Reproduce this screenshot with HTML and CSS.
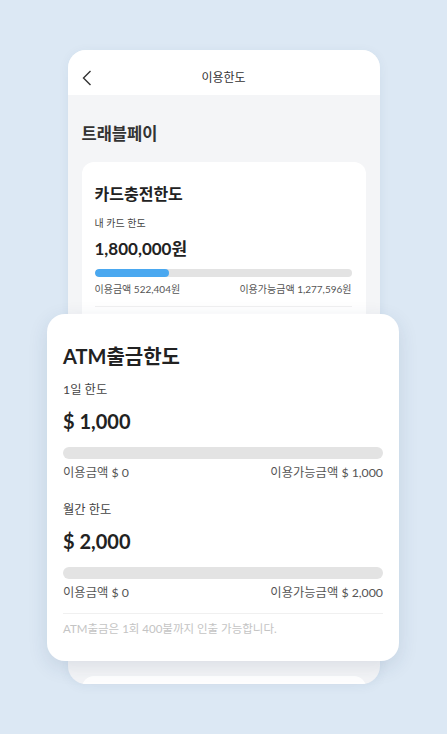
FILE: index.html
```html
<!DOCTYPE html>
<html lang="ko">
  <head>
    <meta charset="UTF-8" />
    <meta name="viewport" content="width=device-width, initial-scale=1.0" />
    <title>이용한도</title>
    <link rel="stylesheet" href="styles.css">
  </head>

  <body>
    <div class="stage">
      <div class="phone">
        <header class="phone-header">
          <svg class="back" width="10" height="16" viewBox="0 0 10 16">
            <path d="M8.5 1 L1.5 8 L8.5 15" fill="none" stroke="#333" stroke-width="1.4" />
          </svg>
          <span>이용한도</span>
        </header>

        <div class="phone-body">
          <div class="page-title">트래블페이</div>

          <section class="card">
            <div class="limit-title">카드충전한도</div>
            <div class="limit-label">내 카드 한도</div>
            <div class="limit-amount">1,800,000원</div>
            <div class="bar"><div class="bar-fill" style="width: 29%"></div></div>
            <div class="bar-info">
              <span>이용금액 522,404원</span>
              <span>이용가능금액 1,277,596원</span>
            </div>
            <div class="divider"></div>
            <!-- ATM section sits under the enlarged callout -->
            <div class="card-rest"></div>
          </section>

          <section class="card next-card"></section>
        </div>
      </div>

      <section class="callout">
        <div class="limit-title">ATM출금한도</div>
        <div class="limit-label">1일 한도</div>
        <div class="limit-amount">$ 1,000</div>
        <div class="bar"></div>
        <div class="bar-info">
          <span>이용금액 $ 0</span>
          <span>이용가능금액 $ 1,000</span>
        </div>
        <div class="limit-label second">월간 한도</div>
        <div class="limit-amount">$ 2,000</div>
        <div class="bar"></div>
        <div class="bar-info">
          <span>이용금액 $ 0</span>
          <span>이용가능금액 $ 2,000</span>
        </div>
        <div class="divider"></div>
        <div class="note">ATM출금은 1회 400불까지 인출 가능합니다.</div>
      </section>
    </div>
  </body>
</html>
```

FILE: styles.css
```css
body {
  margin: 0;
  font-family: "Lato", "Noto Sans CJK KR", sans-serif;
  background: #dce8f4;
  color: #222;
  height: 734px;
  overflow: hidden;
}

.stage {
  position: relative;
  display: flex;
  justify-content: center;
  padding-top: 50px;
}

/* phone frame behind the callout */
.phone {
  width: 312px;
  height: 634px;
  border-radius: 18px;
  overflow: hidden;
  background: #f4f5f7;
  box-shadow: 0 2px 12px rgba(40, 70, 110, 0.06);
}

.phone-header {
  position: relative;
  height: 45px;
  padding-top: 10px;
  box-sizing: border-box;
  background: #ffffff;
  text-align: center;
  font-size: 12px;
  line-height: 35px;
  color: #333;
}

.back {
  position: absolute;
  left: 14px;
  top: 20px;
}

.phone-body {
  padding: 27px 14px 0;
}

.page-title {
  font-size: 16.5px;
  font-weight: bold;
  line-height: 24px;
  color: #333;
}

.card {
  margin-top: 16px;
  padding: 21px 14px 20px 13px;
  background: #ffffff;
  border-radius: 12px;
}

.card .limit-title {
  font-size: 16px;
  font-weight: bold;
  line-height: 22px;
}

.card .limit-label {
  margin-top: 12px;
  font-size: 10px;
  line-height: 13px;
  color: #444;
}

.card .limit-amount {
  margin-top: 7px;
  font-size: 17px;
  font-weight: bold;
  line-height: 24px;
}

.card .bar {
  margin-top: 8px;
  height: 8px;
  border-radius: 4px;
}

.card .bar-info {
  margin-top: 6px;
  font-size: 10px;
  line-height: 13px;
}

.card .divider {
  margin-top: 10px;
}

.card-rest {
  height: 330px;
}

.next-card {
  height: 60px;
  margin-top: 19px;
  padding: 0;
}

.bar {
  background: #e3e3e3;
  overflow: hidden;
}

.bar-fill {
  height: 100%;
  background: #4aa8f0;
  border-radius: inherit;
}

.bar-info {
  display: flex;
  justify-content: space-between;
  color: #555;
}

.divider {
  height: 1px;
  background: #f0f0f0;
}

/* enlarged ATM card over the phone */
.callout {
  position: absolute;
  top: 314px;
  left: 47px;
  width: 352px;
  box-sizing: border-box;
  padding: 28px 16px 24px;
  background: #ffffff;
  border-radius: 18px;
  box-shadow: 0 6px 20px rgba(30, 60, 100, 0.12);
}

.callout .limit-title {
  font-size: 20px;
  font-weight: bold;
  line-height: 28px;
}

.callout .limit-label {
  margin-top: 12px;
  font-size: 12.3px;
  line-height: 16px;
  color: #444;
}

.callout .limit-label.second {
  margin-top: 21px;
}

.callout .limit-amount {
  margin-top: 9px;
  font-size: 20px;
  font-weight: bold;
  line-height: 28px;
}

.callout .bar {
  margin-top: 12px;
  height: 12px;
  border-radius: 6px;
}

.callout .bar-info {
  margin-top: 6px;
  font-size: 12.3px;
  line-height: 16px;
}

.callout .divider {
  margin-top: 12px;
}

.note {
  margin-top: 7px;
  font-size: 11.5px;
  line-height: 16px;
  color: #c4c4c4;
}
```
